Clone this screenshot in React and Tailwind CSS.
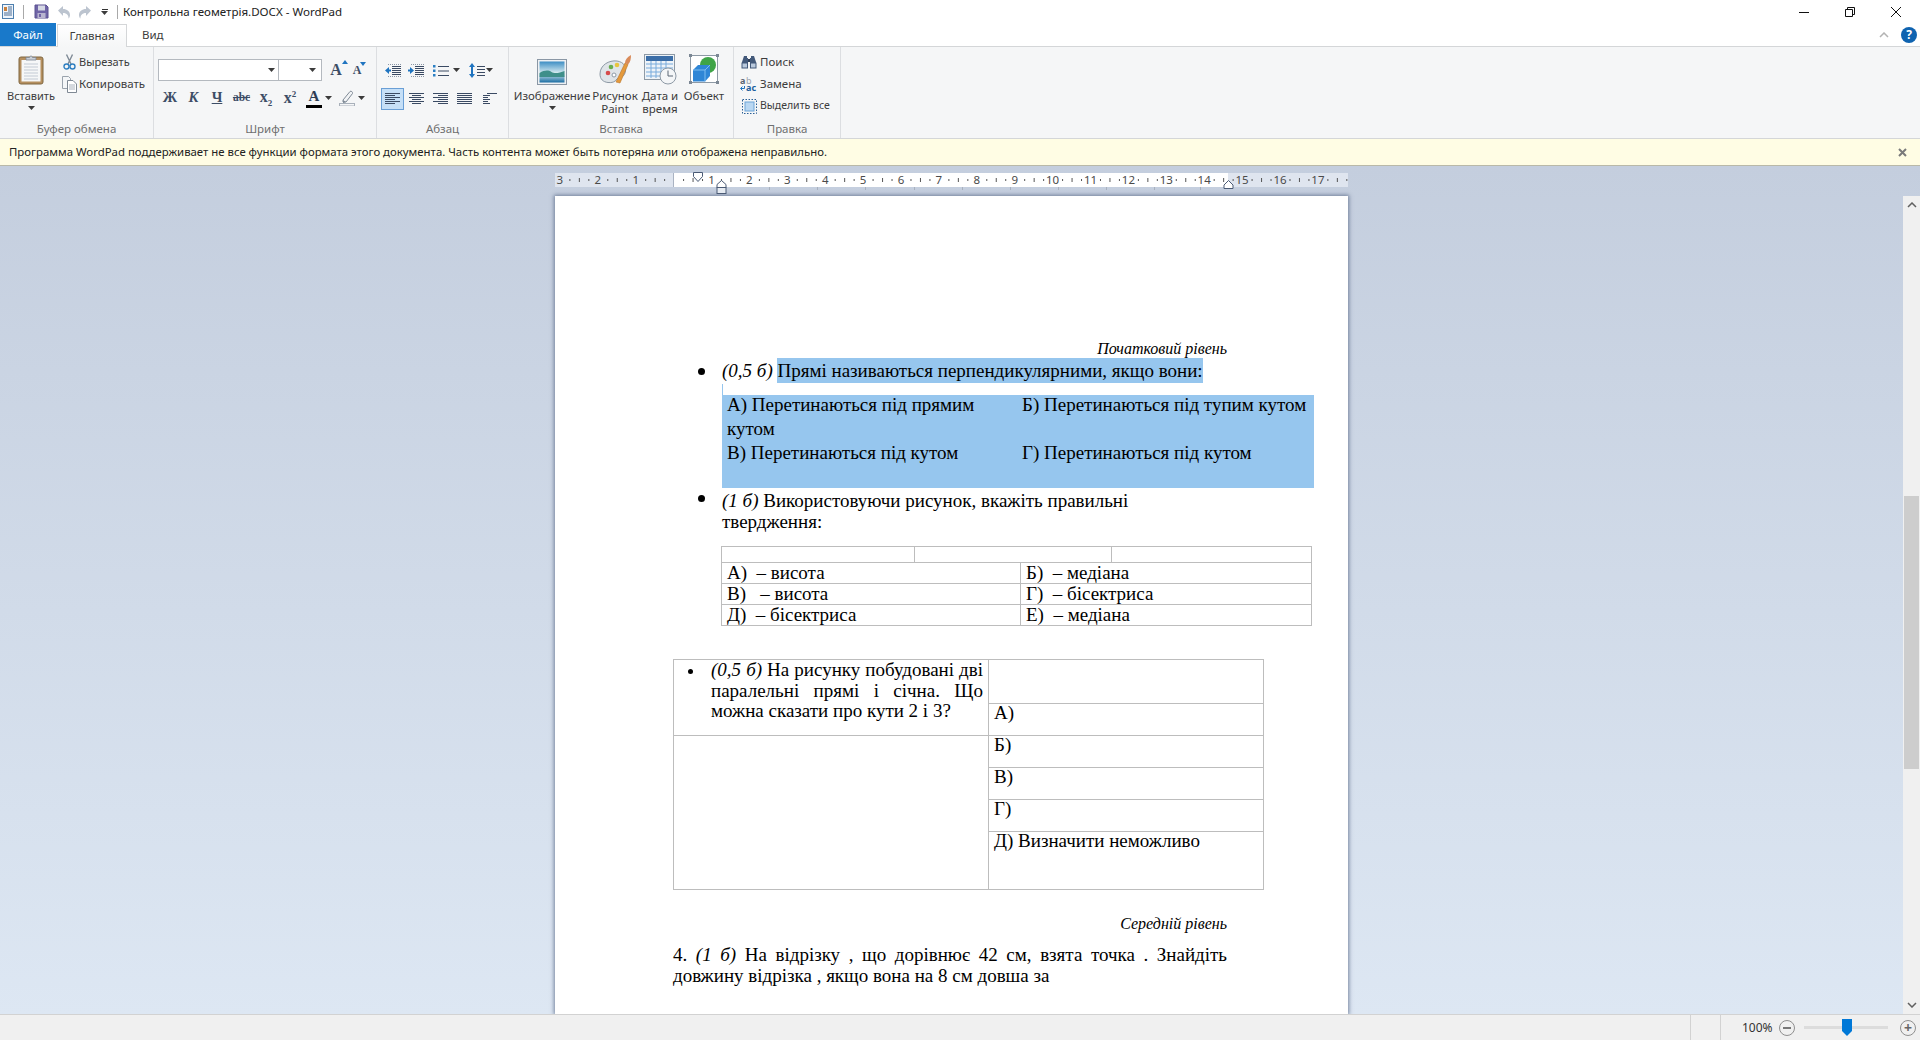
import { Fragment } from 'react';

const Caret = ({ className = '' }) => (
  <svg width="7" height="4" viewBox="0 0 7 4" className={className}><path d="M0 0h7L3.5 4z" fill="#3b3b3b" /></svg>
);

const Lines = ({ rows, w = 15 }) => (
  <svg width={w} height="14" viewBox={`0 0 ${w} 14`} className="shrink-0">
    {rows.map(([x, len], i) => <rect key={i} x={x} y={1 + i * 2} width={len} height="1" fill="#3a4a63" />)}
  </svg>
);

const AppIcon = () => (
  <svg width="14" height="15" viewBox="0 0 14 15">
    <rect x="1.5" y="0.5" width="11" height="14" fill="#eef4fb" stroke="#4d7fae" />
    <path d="M3 3h3v4H3z" fill="#c9803c" />
    <path d="M7 3h4M7 5h4M7 7h4M3 9h8M3 11h8" stroke="#4c6e96" />
  </svg>
);

const SaveIcon = () => (
  <svg width="15" height="15" viewBox="0 0 15 15">
    <path d="M1 1h11l2 2v11H1z" fill="#6f64a6" stroke="#5b5190" />
    <rect x="4" y="1.5" width="7" height="5" fill="#d5d8e4" />
    <rect x="3.5" y="9" width="8" height="5" fill="#b9b5d0" />
    <rect x="5" y="10" width="2" height="3" fill="#6f64a6" />
  </svg>
);

const UndoIcon = ({ flip }) => (
  <svg width="14" height="14" viewBox="0 0 14 14" className={flip ? '-scale-x-100' : ''}>
    <path d="M1 5.5 6 1v3c4 0 7 2.5 7 6 0 1.6-.6 2.8-1.5 3.5.4-3-1.500-5.500-5.500-5.500v3z" fill="#bcc4cf" />
  </svg>
);

const ClipboardIcon = () => (
  <svg width="26" height="31" viewBox="0 0 26 31">
    <rect x="1" y="3" width="24" height="27" rx="2" fill="#b58f5f" stroke="#7f6640" />
    <rect x="3.500" y="6" width="19" height="21.500" fill="#f6f7f8" />
    <path d="M6 10h14M6 13h14M6 16h14M6 19h14M6 22h14M6 25h14" stroke="#c3cad4" />
    <path d="M8 6V3.500h3.500C12 1.500 14 1.500 14.500 3.500H18V6z" fill="#c9ced6" stroke="#7b8794" strokeWidth="0.8" />
  </svg>
);

const ScissorsIcon = () => (
  <svg width="13" height="16" viewBox="0 0 13 16">
    <path d="M3.500 0.500 8 10M9.500 0.500 5 10" stroke="#7f8a96" strokeWidth="1.400" />
    <circle cx="3.500" cy="12.500" r="2.500" fill="none" stroke="#2f7fc1" strokeWidth="1.400" />
    <circle cx="9.500" cy="12.500" r="2.500" fill="none" stroke="#2f7fc1" strokeWidth="1.400" />
  </svg>
);

const CopyIcon = () => (
  <svg width="15" height="17" viewBox="0 0 15 17">
    <path d="M0.500 0.500h6l2 2v10h-8z" fill="#f4f6f8" stroke="#9aa3ad" />
    <path d="M5.500 4.500h5.500l3.500 3.500v8.500h-9z" fill="#fff" stroke="#7f8994" />
    <path d="M7 9h6M7 11h6M7 13h6" stroke="#a9b2bd" />
  </svg>
);

const IndentIcon = ({ right }) => (
  <svg width="17" height="13" viewBox="0 0 17 13">
    <path d="M7 2.500h9M7 4.500h9M7 6.500h9M7 8.500h9M7 10.500h9" stroke="#3a4a63" />
    <path d="M3 0.500h13M3 12.500h13" stroke="#8a96a6" strokeDasharray="1 1" />
    {right
      ? <path d="M0 5.500h2V3l4 3.500L2 10V7.500H0z" fill="#1f74c0" />
      : <path d="M6 5.500H4V3L0 6.500 4 10V7.500h2z" fill="#1f74c0" />}
  </svg>
);

const ListIcon = () => (
  <svg width="16" height="13" viewBox="0 0 16 13">
    <rect x="0" y="1" width="2.500" height="2.500" fill="#2b7fc4" />
    <rect x="0" y="5.500" width="2.500" height="2.500" fill="#2b7fc4" />
    <rect x="0" y="10" width="2.500" height="2.500" fill="#2b7fc4" />
    <path d="M5 2.500h11M5 7h11M5 11.500h11" stroke="#3a4a63" />
  </svg>
);

const LineSpacingIcon = () => (
  <svg width="16" height="15" viewBox="0 0 16 15">
    <path d="M3 0 6 4H4v7h2l-3 4-3-4h2V4H0z" fill="#1f74c0" />
    <path d="M8 3.500h8M8 6.500h8M8 9.500h8M8 12.500h8" stroke="#3a4a63" />
  </svg>
);

const PictureIcon = () => (
  <svg width="30" height="26" viewBox="0 0 30 26">
    <defs>
      <linearGradient id="sky" x1="0" y1="0" x2="0" y2="1"><stop offset="0" stopColor="#3d8ec4" /><stop offset="0.55" stopColor="#d7ebf0" /><stop offset="1" stopColor="#1b6ea3" /></linearGradient>
    </defs>
    <rect x="0.500" y="0.500" width="29" height="25" fill="#eef1f4" stroke="#8a97a5" />
    <rect x="2.500" y="2.500" width="25" height="21" fill="url(#sky)" />
    <path d="M2.500 14c5-3 9-3 12-1s8 1 13-1v6h-25z" fill="#3f8f8a" />
  </svg>
);

const PaletteIcon = () => (
  <svg width="33" height="31" viewBox="0 0 33 31">
    <path d="M1 20C1 11 10 6 18 7c7 1 10 6 8 12-1.500 5-6 4-8 6-2 3-5 4-9 3.500C4 28 1 25 1 20z" fill="#dfe4e8" stroke="#8d99a5" />
    <circle cx="9" cy="19" r="2.300" fill="#d64b4b" />
    <circle cx="12" cy="13" r="2.300" fill="#69ad4f" />
    <circle cx="18" cy="11" r="2.300" fill="#e7c53f" />
    <circle cx="15" cy="21" r="2" fill="#fff" stroke="#8d99a5" />
    <path d="M17 28 26 9l3 1.500L21 29z" fill="#e59a3c" stroke="#b9742a" strokeWidth="0.600" />
    <path d="M26 9c0-3 2-6 6-8 0 4-.5 7-3 9.500z" fill="#d98b5a" />
  </svg>
);

const CalendarIcon = () => (
  <svg width="33" height="31" viewBox="0 0 33 31">
    <rect x="0.500" y="0.500" width="30" height="25" fill="#eef3f8" stroke="#8d99a5" />
    <rect x="2" y="2" width="27" height="5" fill="#3b6ea8" />
    <path d="M2 10h27M2 14h27M2 18h27M2 22h27M7 7v17M12 7v17M17 7v17M22 7v17" stroke="#79abdc" />
    <circle cx="24" cy="22" r="8" fill="#f4f6f8" stroke="#8d99a5" />
    <path d="M24 16.500V22h5" fill="none" stroke="#5a6674" />
  </svg>
);

const ObjectIcon = () => (
  <svg width="30" height="31" viewBox="0 0 30 31">
    <rect x="1.500" y="1.500" width="27" height="27" fill="#fff" stroke="#8d99a5" />
    <path d="M0 0h3v3H0zM27 0h3v3h-3zM0 27h3v3H0zM27 27h3v3h-3z" fill="#7b8794" />
    <circle cx="19" cy="11" r="8" fill="#3fa447" />
    <path d="M4 16 9 11h12v11l-5 5.500H4z" fill="#2f86d6" />
    <path d="M4 16h12v11.500M16 16l5-5" fill="none" stroke="#7fbdf0" />
  </svg>
);

const BinocularsIcon = () => (
  <svg width="16" height="14" viewBox="0 0 16 14">
    <path d="M3 1h3v2h1v8H1V7zM10 1h3l2 6v4H9V3h1z" fill="#43597a" />
    <rect x="1" y="8" width="5.500" height="5" fill="#b9c9dd" stroke="#43597a" />
    <rect x="9.500" y="8" width="5.500" height="5" fill="#b9c9dd" stroke="#43597a" />
    <rect x="7" y="4" width="2" height="3" fill="#2f3f58" />
  </svg>
);

const ReplaceIcon = () => (
  <svg width="18" height="17" viewBox="0 0 18 17" className="overflow-visible">
    <text x="0" y="8" fontSize="9" fontWeight="700" fill="#5a6674" fontFamily="'Noto Sans',sans-serif">a</text>
    <text x="6" y="8" fontSize="9" fill="#9aa3ad" fontFamily="'Noto Sans',sans-serif">b</text>
    <path d="M4.500 10v2.500H1M2.500 10.500l-2 2 2 2" fill="none" stroke="#1f74c0" />
    <text x="6" y="15" fontSize="9" fontWeight="700" fill="#1b5f9e" fontFamily="'Noto Sans',sans-serif">ac</text>
  </svg>
);

const SelectAllIcon = () => (
  <svg width="15" height="15" viewBox="0 0 15 15">
    <rect x="0.500" y="0.500" width="14" height="14" fill="none" stroke="#2a5f95" strokeDasharray="1.500 1.500" />
    <rect x="3" y="3" width="9" height="9" fill="#b9d7f2" stroke="#6fa5d8" />
  </svg>
);

const Highlighter = () => (
  <svg width="16" height="16" viewBox="0 0 16 16">
    <path d="M4 10 11 1.500c1-1 3 .5 2.500 2L7 12H4z" fill="#f2f4f6" stroke="#7f8a96" />
    <path d="M4 10l3 2-3 1z" fill="#7f8a96" />
    <rect x="0.500" y="13.500" width="15" height="2.500" fill="#f5f6f7" stroke="#a8b0ba" />
  </svg>
);

const SmallRow = ({ icon, label, iconBox, text = 'text-[11.5px]' }) => (
  <div className="flex items-center h-[22px]">
    <div className={`flex justify-center ${iconBox}`}>{icon}</div>
    <span className={`${text} text-[#3c3c3c] whitespace-nowrap`}>{label}</span>
  </div>
);

const BigButton = ({ icon, label, caret, width }) => (
  <div className={`flex flex-col items-center shrink-0 pt-[8px] ${width}`}>
    <div className="h-[30px] flex items-end">{icon}</div>
    <div className="mt-[4px] text-[11.5px] leading-[13px] text-center text-[#3c3c3c] whitespace-nowrap">{label}</div>
    {caret && <Caret className="mt-[4px]" />}
  </div>
);

const Group = ({ title, width, children }) => (
  <div className={`flex flex-col h-full shrink-0 border-r border-[#dcdee1] ${width}`}>
    <div className="flex-1 min-h-0">{children}</div>
    <div className="h-[20px] leading-[21px] text-center text-[11.5px] text-[#6f6f6f]">{title}</div>
  </div>
);

function Ribbon() {
  return (
    <div className="h-[93px] flex bg-[#f5f6f7] border-t border-b border-[#d4d6d8] shrink-0">
      <Group title="Буфер обмена" width="w-[154px]">
        <div className="flex">
          <div className="w-[62px] flex flex-col items-center pt-[7px]">
            <ClipboardIcon />
            <div className="mt-[4px] text-[11px] leading-[14px] text-[#3c3c3c]">Вставить</div>
            <Caret className="mt-[3px]" />
          </div>
          <div className="pt-[4px]">
            <SmallRow icon={<ScissorsIcon />} label="Вырезать" iconBox="w-[17px] ml-[-1px] mr-[1px]" text="text-[11px]" />
            <SmallRow icon={<CopyIcon />} label="Копировать" iconBox="w-[17px] ml-[-1px] mr-[1px]" />
          </div>
        </div>
      </Group>

      <Group title="Шрифт" width="w-[223px]">
        <div className="pl-[4px] pt-[12px]">
          <div className="flex items-center h-[22px]">
            <div className="w-[121px] h-[22px] bg-white border border-[#b4b9bf] flex items-center justify-end pr-[3px]"><Caret /></div>
            <div className="w-[44px] h-[22px] bg-white border border-[#b4b9bf] ml-[-1px] flex items-center justify-end pr-[5px]"><Caret /></div>
            <div className="ml-[5px] w-[18px] relative text-center font-['Liberation_Serif',serif] font-bold text-[16px] text-[#3d4d66]">A
              <svg width="6" height="4" className="absolute right-[-3px] top-[2px]"><path d="M0 4 3 0l3 4z" fill="#1f74c0" /></svg>
            </div>
            <div className="ml-[6px] w-[12px] relative text-center font-['Liberation_Serif',serif] font-bold text-[12px] text-[#3d4d66]">A
              <svg width="6" height="4" className="absolute right-[-3px] top-[1px]"><path d="M0 0h6L3 4z" fill="#1f74c0" /></svg>
            </div>
          </div>
          <div className="flex items-center h-[22px] mt-[6px] font-['Liberation_Serif',serif] text-[#3d4d66]">
            <div className="w-[24px] text-center font-bold text-[14.500px]">Ж</div>
            <div className="w-[23px] text-center italic font-bold text-[14.500px]">К</div>
            <div className="w-[24px] text-center font-bold text-[14.500px] underline">Ч</div>
            <div className="w-[25px] text-center font-bold text-[11.500px] line-through">abc</div>
            <div className="w-[24px] text-center font-bold text-[16px]">x<span className="text-[9px] align-sub">2</span></div>
            <div className="w-[24px] text-center font-bold text-[16px]">x<span className="text-[9px] align-super">2</span></div>
            <div className="ml-[4px] w-[16px] flex flex-col items-center">
              <span className="font-bold text-[15px] leading-[15px] text-[#2f3d55]">A</span>
              <span className="w-[16px] h-[3px] bg-black mt-[1px]" />
            </div>
            <Caret className="ml-[3px]" />
            <div className="ml-[7px]"><Highlighter /></div>
            <Caret className="ml-[3px]" />
          </div>
        </div>
      </Group>

      <Group title="Абзац" width="w-[132px]">
        <div className="pl-[4px] pt-[12px]">
          <div className="flex items-center h-[22px]">
            <div className="ml-[4px]"><IndentIcon /></div>
            <div className="ml-[6px]"><IndentIcon right /></div>
            <div className="ml-[8px]"><ListIcon /></div>
            <Caret className="ml-[4px]" />
            <div className="ml-[9px]"><LineSpacingIcon /></div>
            <Caret className="ml-[1px]" />
          </div>
          <div className="flex items-center h-[22px] mt-[7px]">
            <div className="w-[23px] h-[22px] bg-[#c5dff7] border border-[#6a9fd6] flex items-center justify-center">
              <Lines rows={[[0, 15], [0, 10], [0, 15], [0, 10], [0, 15], [0, 10]]} />
            </div>
            <div className="ml-[5px]"><Lines rows={[[0, 15], [3, 9], [0, 15], [3, 9], [0, 15], [3, 9]]} /></div>
            <div className="ml-[9px]"><Lines rows={[[0, 15], [5, 10], [0, 15], [5, 10], [0, 15], [5, 10]]} /></div>
            <div className="ml-[9px]"><Lines rows={[[0, 15], [0, 15], [0, 15], [0, 15], [0, 15], [0, 15]]} /></div>
            <div className="ml-[11px]"><Lines w={14} rows={[[4, 10], [0, 7], [0, 5], [0, 7], [0, 5], [0, 7]]} /></div>
          </div>
        </div>
      </Group>

      <Group title="Вставка" width="w-[225px]">
        <div className="flex pl-[5px]">
          <BigButton icon={<PictureIcon />} label="Изображение" caret width="w-[76px]" />
          <BigButton icon={<PaletteIcon />} label={<>Рисунок<br />Paint</>} width="w-[50px]" />
          <BigButton icon={<CalendarIcon />} label={<>Дата и<br />время</>} width="w-[40px]" />
          <BigButton icon={<ObjectIcon />} label="Объект" width="w-[48px]" />
        </div>
      </Group>

      <Group title="Правка" width="w-[107px]">
        <div className="pl-[7px] pt-[4px]">
          <SmallRow icon={<BinocularsIcon />} label="Поиск" iconBox="w-[16px] mr-[3px]" />
          <SmallRow icon={<ReplaceIcon />} label="Замена" iconBox="w-[16px] mr-[3px]" />
          <SmallRow icon={<SelectAllIcon />} label="Выделить все" iconBox="w-[16px] mr-[3px]" text="text-[10.500px]" />
        </div>
      </Group>
    </div>
  );
}

const cm = 37.9;
const zero = 118.6;

function Ruler() {
  const units = [];
  for (let n = -3; n <= 17; n++) units.push(n);
  const tabs = [214, 262, 310, 359, 407, 455, 503, 551, 599, 645];
  return (
    <svg width="793" height="30" className="overflow-visible relative z-10">
      <rect x="0" y="7" width="793" height="14" fill="#dfe5ef" />
      <rect x="118" y="7" width="555" height="14" fill="#fff" />
      <path d="M118.500 7v14" stroke="#aab3c2" />
      {units.map(n => {
        const x = zero + n * cm;
        return (
          <Fragment key={n}>
            {n !== 0 && <text x={x} y="18" textAnchor="middle" fontSize="11.5" fill="#4a4a4a" fontFamily="'Noto Sans',sans-serif">{Math.abs(n)}</text>}
            <rect x={x + cm * 0.25} y="13" width="1" height="2" fill="#555" />
            <rect x={x + cm * 0.5} y="12" width="1" height="4" fill="#555" />
            <rect x={x + cm * 0.75} y="13" width="1" height="2" fill="#555" />
          </Fragment>
        );
      })}
      {tabs.map(x => <rect key={x} x={x} y="21" width="1" height="3" fill="#a8b1bf" />)}
      <path d="M138.500 6.500h9v4l-4.500 5-4.500-5z" fill="#fff" stroke="#4a5a75" />
      <path d="M162 21.500v-3l4.500-4 4.500 4v3z" fill="#fff" stroke="#4a5a75" />
      <rect x="162" y="21.500" width="9" height="6" fill="#e6ebf2" stroke="#4a5a75" />
      <path d="M669 22.500v-3.500l4.500-4.500 4.500 4.500v3.500z" fill="#fff" stroke="#4a5a75" />
    </svg>
  );
}

const Bullet = ({ className = '' }) => <span className={`w-[7px] h-[7px] rounded-full bg-black shrink-0 ${className}`} />;

function DocPage() {
  const cell = 'border border-[#bdbdbd] align-top pl-[5px] pr-[4px] py-0';
  const tight = 'border border-[#bdbdbd] align-top pl-[5px] pr-[4px] pt-[2px] pb-0';
  return (
    <div className="w-[793px] h-full bg-white shadow-[0_0_4px_1px_rgba(90,105,135,0.8)] pl-[118px] pt-[143px] font-['Liberation_Serif','Times_New_Roman',serif] text-[19px] text-black overflow-hidden">
      <div className="w-[554px] h-[19px] leading-[19px] text-right italic text-[16px]">Початковий рівень</div>

      <div className="flex items-center h-[25px] mt-[1px] ml-[25px]">
        <Bullet />
        <div className="ml-[17px] whitespace-nowrap">
          <i>(0,5 б) </i><span className="bg-[#96c6ee] inline-block leading-[25px]">Прямі називаються перпендикулярними, якщо вони:</span>
        </div>
      </div>
      <div className="w-px h-[11px] ml-[49px] bg-[#96c6ee]" />
      <div className="ml-[49px] w-[592px] h-[93px] bg-[#96c6ee] grid grid-cols-[294px_298px] grid-rows-[48px_45px] leading-[24px]">
        <div className="pl-[5px] pr-[6px] mt-[-2px]">А) Перетинаються під прямим кутом</div>
        <div className="px-[6px] mt-[-2px] whitespace-nowrap">Б) Перетинаються під тупим кутом</div>
        <div className="pl-[5px] pr-[6px] mt-[-2px]">В) Перетинаються під кутом</div>
        <div className="px-[6px] mt-[-2px]">Г) Перетинаються під кутом</div>
      </div>

      <div className="flex mt-[2px] ml-[25px] leading-[21px]">
        <Bullet className="mt-[5px]" />
        <div className="ml-[17px]">
          <i>(1 б) </i>Використовуючи рисунок, вкажіть правильні<br />твердження:
        </div>
      </div>

      <table className="ml-[48px] mt-[14px] w-[590px] table-fixed border-collapse leading-[16px]">
        <colgroup>
          <col className="w-[193px]" /><col className="w-[106px]" /><col className="w-[91px]" /><col className="w-[200px]" />
        </colgroup>
        <tbody>
          <tr className="h-[16px]">
            <td className={cell} /><td className={cell} colSpan="2" /><td className={cell} />
          </tr>
          <tr className="h-[21px]">
            <td className={tight} colSpan="2">А)&nbsp; – висота</td>
            <td className={tight} colSpan="2">Б)&nbsp; – медіана</td>
          </tr>
          <tr className="h-[21px]">
            <td className={tight} colSpan="2">В) &nbsp; – висота</td>
            <td className={tight} colSpan="2">Г)&nbsp; – бісектриса</td>
          </tr>
          <tr className="h-[21px]">
            <td className={tight} colSpan="2">Д)&nbsp; – бісектриса</td>
            <td className={tight} colSpan="2">Е)&nbsp; – медіана</td>
          </tr>
        </tbody>
      </table>

      <table className="mt-[33px] w-[590px] table-fixed border-collapse leading-[18.500px]">
        <colgroup><col className="w-[315px]" /><col className="w-[275px]" /></colgroup>
        <tbody>
          <tr className="h-[44px]">
            <td rowSpan="2" className="border border-[#bdbdbd] align-top pl-[37px] pr-[5px] relative text-justify">
              <span className="absolute left-[14px] top-[9px] w-[5px] h-[5px] rounded-full bg-black" />
              <div className="leading-[20.500px]"><i>(0,5 б) </i>На рисунку побудовані дві паралельні прямі і січна. Що можна сказати про кути 2 і 3?</div>
            </td>
            <td className={cell} />
          </tr>
          <tr className="h-[32px]"><td className={cell}>А)</td></tr>
          <tr className="h-[32px]">
            <td rowSpan="4" className={cell} />
            <td className={cell}>Б)</td>
          </tr>
          <tr className="h-[32px]"><td className={cell}>В)</td></tr>
          <tr className="h-[32px]"><td className={cell}>Г)</td></tr>
          <tr className="h-[58px]"><td className={cell}>Д) Визначити неможливо</td></tr>
        </tbody>
      </table>

      <div className="w-[554px] mt-[24px] h-[19px] leading-[19px] text-right italic text-[16px]">Середній рівень</div>
      <p className="w-[554px] mt-[11px] leading-[21px] text-justify">
        4. <i>(1 б)</i> На відрізку , що дорівнює 42 см, взята точка . Знайдіть довжину відрізка , якщо вона на 8 см довша за
      </p>
    </div>
  );
}

export default function App() {
  return (
    <div className="w-[1920px] h-[1040px] flex flex-col overflow-hidden bg-white font-['Noto_Sans',sans-serif] text-[#3c3c3c]">
      {/* title bar */}
      <div className="h-[23px] flex items-center shrink-0">
        <div className="ml-[1px]"><AppIcon /></div>
        <div className="ml-[8px] w-px h-[14px] bg-[#a9a9a9]" />
        <div className="ml-[10px]"><SaveIcon /></div>
        <div className="ml-[8px]"><UndoIcon /></div>
        <div className="ml-[7px]"><UndoIcon flip /></div>
        <div className="ml-[9px] flex flex-col items-center gap-[1px]">
          <span className="w-[6px] h-px bg-[#333]" />
          <Caret />
        </div>
        <div className="ml-[9px] w-px h-[14px] bg-[#a9a9a9]" />
        <div className="ml-[5px] text-[11.550px] text-[#222] whitespace-nowrap">Контрольна геометрія.DOCX - WordPad</div>
        <div className="ml-auto flex items-center pr-[19px] gap-[36px]">
          <svg width="10" height="10"><path d="M0 5.500h10" stroke="#111" /></svg>
          <svg width="10" height="10"><path d="M2.500 2.500V.5h7v7h-2M.5 2.500h7v7h-7z" fill="none" stroke="#111" /></svg>
          <svg width="10" height="10"><path d="M0 0l10 10M10 0 0 10" stroke="#111" /></svg>
        </div>
      </div>

      {/* tabs */}
      <div className="h-[23px] flex items-end shrink-0 text-[11.5px]">
        <div className="w-[56px] h-[23px] bg-[#1979ca] text-white flex items-center justify-center">Файл</div>
        <div className="w-[70px] h-[23px] ml-px mb-[-1px] relative z-10 border border-b-0 border-[#d4d6d8] flex items-center justify-center bg-linear-to-b from-white to-[#f5f6f7]">Главная</div>
        <div className="ml-[15px] h-[23px] flex items-center">Вид</div>
        <div className="ml-auto h-[23px] flex items-center pr-[3px]">
          <svg width="10" height="6" className="mr-[12px]"><path d="M1 5l4-4 4 4" fill="none" stroke="#b3b3b3" strokeWidth="1.500" /></svg>
          <div className="w-[16px] h-[16px] rounded-full bg-[#0f63b0] text-white text-[12px] font-bold flex items-center justify-center">?</div>
        </div>
      </div>

      <Ribbon />

      {/* compatibility message */}
      <div className="h-[27px] flex items-center justify-between shrink-0 pl-[9px] pr-[13px] bg-[#fffde4] border-b border-[#b9b9a8] text-[11.380px] text-[#222]">
        <span>Программа WordPad поддерживает не все функции формата этого документа. Часть контента может быть потеряна или отображена неправильно.</span>
        <svg width="9" height="9"><path d="M1 1l7 7M8 1 1 8" stroke="#7a7a7a" strokeWidth="2" /></svg>
      </div>

      {/* document */}
      <div className="flex-1 min-h-0 flex flex-col bg-linear-to-b from-[#c4cede] to-[#dde7f3]">
        <div className="h-[30px] w-[1903px] flex justify-center shrink-0"><Ruler /></div>
        <div className="flex-1 min-h-0 flex">
          <div className="flex-1 flex justify-center min-h-0"><DocPage /></div>
          <div className="w-[17px] bg-[#f0f0f0] flex flex-col items-center">
            <svg width="10" height="6" className="mt-[6px]"><path d="M1 5l4-4 4 4" fill="none" stroke="#606060" strokeWidth="1.500" /></svg>
            <div className="w-[15px] h-[273px] mt-[288px] bg-[#cdcdcd]" />
            <svg width="10" height="6" className="mt-auto mb-[6px]"><path d="M1 1l4 4 4-4" fill="none" stroke="#606060" strokeWidth="1.500" /></svg>
          </div>
        </div>
      </div>

      {/* status bar */}
      <div className="h-[26px] flex items-center bg-[#f0f0f0] border-t border-[#d2d2d2] shrink-0 text-[12px] text-[#333]">
        <div className="ml-[1690px] w-[31px] h-full border-l border-r border-[#d2d2d2]" />
        <span className="ml-[21px] w-[30px]">100%</span>
        <div className="ml-[7px] w-[16px] h-[16px] rounded-full border border-[#8f8f8f] flex items-center justify-center"><span className="w-[8px] h-[2px] bg-[#777]" /></div>
        <div className="ml-[9px] w-[84px] h-[3px] bg-[#dcdcdc] relative">
          <svg width="10" height="17" className="absolute left-[38px] top-[-7px]"><path d="M0 0h10v12l-5 5-5-5z" fill="#0078d7" /></svg>
        </div>
        <div className="ml-[12px] w-[16px] h-[16px] rounded-full border border-[#8f8f8f] flex items-center justify-center text-[14px] font-bold text-[#666] leading-none">+</div>
      </div>
    </div>
  );
}
